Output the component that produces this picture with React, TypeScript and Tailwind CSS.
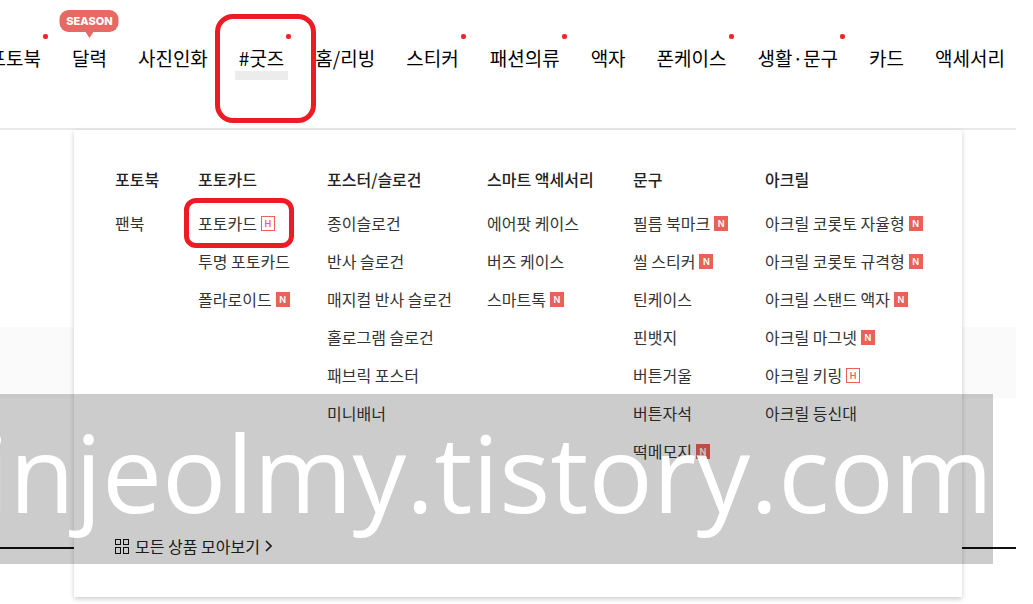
import React from 'react';

type Mark = 'new' | 'hot';

type NavItem = {
  label: string;
  dot?: boolean;
  season?: boolean;
  active?: boolean;
};

type MenuItem = {
  label: string;
  mark?: Mark;
  circled?: boolean;
};

const navItems: NavItem[] = [
  { label: '포토북', dot: true },
  { label: '달력', season: true },
  { label: '사진인화' },
  { label: '#굿즈', dot: true, active: true },
  { label: '홈/리빙' },
  { label: '스티커', dot: true },
  { label: '패션의류', dot: true },
  { label: '액자' },
  { label: '폰케이스', dot: true },
  { label: '생활·문구', dot: true },
  { label: '카드' },
  { label: '액세서리' },
];

const columns: { title: string; items: MenuItem[] }[] = [
  { title: '포토북', items: [{ label: '팬북' }] },
  {
    title: '포토카드',
    items: [
      { label: '포토카드', mark: 'hot', circled: true },
      { label: '투명 포토카드' },
      { label: '폴라로이드', mark: 'new' },
    ],
  },
  {
    title: '포스터/슬로건',
    items: [
      { label: '종이슬로건' },
      { label: '반사 슬로건' },
      { label: '매지컬 반사 슬로건' },
      { label: '홀로그램 슬로건' },
      { label: '패브릭 포스터' },
      { label: '미니배너' },
    ],
  },
  {
    title: '스마트 액세서리',
    items: [
      { label: '에어팟 케이스' },
      { label: '버즈 케이스' },
      { label: '스마트톡', mark: 'new' },
    ],
  },
  {
    title: '문구',
    items: [
      { label: '필름 북마크', mark: 'new' },
      { label: '씰 스티커', mark: 'new' },
      { label: '틴케이스' },
      { label: '핀뱃지' },
      { label: '버튼거울' },
      { label: '버튼자석' },
      { label: '떡메모지', mark: 'new' },
    ],
  },
  {
    title: '아크릴',
    items: [
      { label: '아크릴 코롯토 자율형', mark: 'new' },
      { label: '아크릴 코롯토 규격형', mark: 'new' },
      { label: '아크릴 스탠드 액자', mark: 'new' },
      { label: '아크릴 마그넷', mark: 'new' },
      { label: '아크릴 키링', mark: 'hot' },
      { label: '아크릴 등신대' },
    ],
  },
];

const MarkBadge: React.FC<{ mark: Mark }> = ({ mark }) => {
  const base = "flex h-[15px] w-[14px] shrink-0 items-center justify-center font-['Inter',sans-serif] text-[9px] leading-none font-semibold";
  return mark === 'new' ? (
    <span className={`${base} bg-[#ea6158] text-white`}>N</span>
  ) : (
    <span className={`${base} border border-[#ea6158] text-[#ea6158]`}>H</span>
  );
};

const SeasonBubble: React.FC = () => (
  <span className="absolute -top-[34px] left-1/2 flex h-[22px] w-[59px] -translate-x-1/2 items-center justify-center rounded-[9px] bg-[#e66a63] font-['Inter',sans-serif] text-[11px] leading-none font-extrabold text-white">
    SEASON
    <svg className="absolute top-full left-1/2 -translate-x-1/2" width="8" height="6" viewBox="0 0 8 6" aria-hidden="true">
      <path d="M0 0h8L4 6z" fill="#e66a63" />
    </svg>
  </span>
);

const GridIcon: React.FC = () => (
  <svg width="15" height="15" viewBox="0 0 15 15" fill="none" stroke="#111" aria-hidden="true">
    <rect x="0.5" y="0.5" width="5" height="5" />
    <rect x="8.5" y="0.5" width="5" height="5" />
    <rect x="0.5" y="8.5" width="5" height="6" />
    <rect x="8.5" y="8.5" width="5" height="6" />
  </svg>
);

const TopNav: React.FC = () => (
  <header className="overflow-hidden border-b-2 border-[#e9e9e9]">
    <nav className="flex justify-end gap-[31px] pt-[44px] pr-[11px] pb-[56px]">
      {navItems.map((item) => (
        <a key={item.label} href="#" className="relative isolate shrink-0 text-[19px] leading-[28px] whitespace-nowrap text-black">
          {item.season && <SeasonBubble />}
          {item.dot && <span className="absolute -top-[10px] -right-[7px] size-[5px] rounded-[2px] bg-[#f0262b]" />}
          {item.active && (
            <>
              <span className="absolute -right-1 -bottom-2 -left-1 -z-10 h-[9px] bg-[#ececec]" />
              <span className="absolute -top-[30px] -right-[32px] -left-[24px] h-[109px] rounded-[18px] border-5 border-[#ed1c24]" />
            </>
          )}
          {item.label}
        </a>
      ))}
    </nav>
  </header>
);

const MegaMenu: React.FC = () => (
  <div className="absolute top-0 right-[54px] left-[74px] bg-white px-[41px] pt-[37px] pb-[39px] shadow-[0_2px_5px_rgba(0,0,0,0.2)]">
    <div className="grid grid-cols-[83px_129px_160px_146px_132px_1fr]">
      {columns.map((column) => (
        <div key={column.title}>
          <h3 className="text-base leading-6 font-medium whitespace-nowrap text-[#222]">{column.title}</h3>
          <ul className="mt-[13px]">
            {column.items.map((item) => (
              <li key={item.label} className="flex h-[38px] items-center">
                <a href="#" className="relative flex items-center gap-1 text-base leading-6 whitespace-nowrap text-[#333]">
                  {item.circled && (
                    <span className="absolute -top-[13px] -right-[19px] -left-[14px] h-[50px] rounded-[12px] border-5 border-[#ed1c24]" />
                  )}
                  {item.label}
                  {item.mark && <MarkBadge mark={item.mark} />}
                </a>
              </li>
            ))}
          </ul>
        </div>
      ))}
    </div>
    <a href="#" className="mt-16 flex w-fit items-center gap-[5px] text-base leading-6 text-[#222]">
      <GridIcon />
      모든 상품 모아보기
      <svg width="7" height="12" viewBox="0 0 7 12" fill="none" stroke="#222" strokeWidth="1.6" aria-hidden="true">
        <path d="M1 1l5 5-5 5" />
      </svg>
    </a>
  </div>
);

const App: React.FC = () => {
  return (
    <div className="relative min-h-screen overflow-hidden bg-white font-['Noto_Sans_CJK_KR',sans-serif]">
      <div className="mr-[17px]">
        <TopNav />
        <main className="relative pt-[197px]">
          <div className="h-[71px] bg-[#fafafa]" />
          <div className="mt-[149px] h-[2px] bg-[#111]" />
          <MegaMenu />
        </main>
      </div>
      <div className="pointer-events-none absolute top-[394px] right-[40px] left-0 flex h-[170px] justify-end overflow-hidden bg-black/20">
        <p className="shrink-0 font-['Open_Sans',sans-serif] text-[107px] leading-[155px] whitespace-nowrap text-white">
          injeolmy.tistory.com
        </p>
      </div>
    </div>
  );
};

export default App;
